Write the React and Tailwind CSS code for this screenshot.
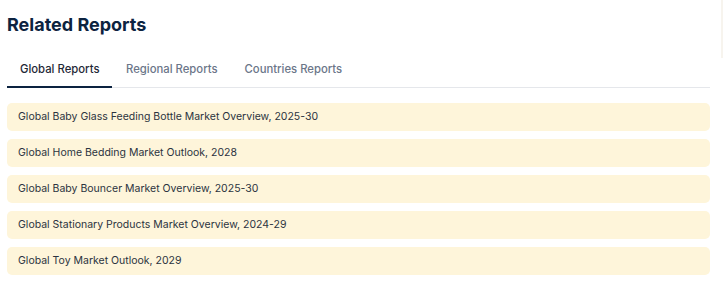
export default function App() {
  const items = [
    "Global Baby Glass Feeding Bottle Market Overview, 2025-30",
    "Global Home Bedding Market Outlook, 2028",
    "Global Baby Bouncer Market Overview, 2025-30",
    "Global Stationary Products Market Overview, 2024-29",
    "Global Toy Market Outlook, 2029",
  ];
  const tabs = ["Global Reports", "Regional Reports", "Countries Reports"];
  return (
    <div className="flex w-[726px] h-[283px] bg-white overflow-hidden" style={{ fontFamily: "Inter, 'Noto Sans', sans-serif" }}>
      <div className="w-[710px] pl-[7px] shrink-0">
        <h2 className="mt-[11px] text-[18px] leading-[28px] font-bold text-[#0c2340]">Related Reports</h2>
        <div className="mt-[13px] flex border-b border-[#e5e7eb]">
          {tabs.map((t, i) => (
            <div
              key={t}
              className={
                i === 0
                  ? "-mb-px px-[13px] pt-[9px] pb-[9px] border-b-2 border-[#0c2340] text-[11.3px] leading-4 font-medium text-[#1f2937]"
                  : "-mb-px px-[13.5px] pt-[9px] pb-[9px] border-b-2 border-transparent text-[11.3px] leading-4 font-medium text-[#6b7689]"
              }
            >
              {t}
            </div>
          ))}
        </div>
        <div className="mt-[15px] flex flex-col gap-2">
          {items.map((t) => (
            <div key={t} className="h-7 flex items-center px-[11px] rounded-[5px] bg-[#fef5da] text-[10.5px] text-[#2b3340]">
              {t}
            </div>
          ))}
        </div>
      </div>
      <div className="ml-[11px] w-[2px] h-[58px] bg-[#f7f4ee]" />
    </div>
  );
}
